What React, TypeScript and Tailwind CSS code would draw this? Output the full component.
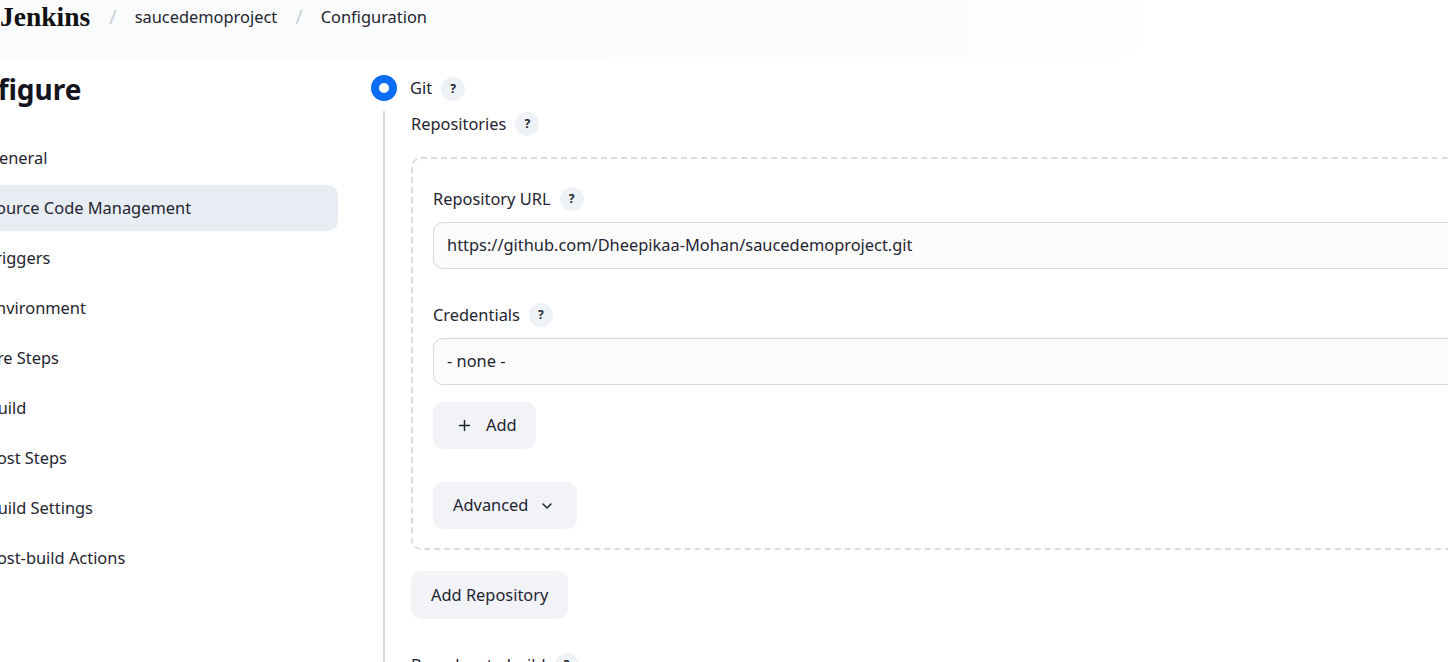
import { ChevronDown, Plus } from "lucide-react"

const navItems = [
  "General",
  "Source Code Management",
  "Triggers",
  "Environment",
  "Pre Steps",
  "Build",
  "Post Steps",
  "Build Settings",
  "Post-build Actions",
]

function Help() {
  return (
    <span className="inline-flex h-6 w-6 items-center justify-center rounded-full bg-[#eef1f5] text-[12px] font-bold text-[#1f2430]">
      ?
    </span>
  )
}

function Label({ text }: { text: string }) {
  return (
    <div className="flex h-6 items-center gap-[9px] text-[16.4px] text-[#1f2430]">
      <span>{text}</span>
      <Help />
    </div>
  )
}

function Field({ value }: { value: string }) {
  return (
    <div className="mt-[11px] flex h-[47px] items-center rounded-[10px] border border-[#d3d8e2] bg-[#fcfcfd] pl-[13px] text-[16.4px] text-[#1f2430]">
      {value}
    </div>
  )
}

export default function App() {
  return (
    <div
      className="relative h-[662px] w-[1448px] overflow-hidden bg-white text-[#1f2430]"
      style={{ fontFamily: '"Noto Sans", "Open Sans", sans-serif' }}
    >
      {/* header */}
      <div className="h-[58px] w-[1140px] rounded-br-[24px] bg-gradient-to-r from-[#fafbfc] via-[#fbfcfd] to-[#fdfdfe]">
        <div className="flex h-[34px] items-center text-[16.4px]">
          <span
            className="text-[27.5px] font-bold leading-none text-[#111]"
            style={{ fontFamily: '"Liberation Serif", serif' }}
          >
            Jenkins
          </span>
          <span className="ml-[19px] mr-[18px] text-[20px] text-[#c8cfdb]">/</span>
          <span>saucedemoproject</span>
          <span className="ml-[18px] mr-[18px] text-[20px] text-[#c8cfdb]">/</span>
          <span>Configuration</span>
        </div>
      </div>

      <div className="flex">
        {/* sidebar */}
        <div className="ml-[-50px] w-[388px] shrink-0">
          <h1 className="ml-[-6px] mt-[13px] h-9 text-[28px] font-bold leading-9 text-[#14141f]">
            Configure
          </h1>
          <div className="mt-[28px] flex flex-col gap-1">
            {navItems.map((item) => (
              <div
                key={item}
                className={
                  "flex h-[46px] items-center rounded-[10px] pl-[37px] text-[16.4px] " +
                  (item === "Source Code Management" ? "bg-[#e8ecf3]" : "")
                }
              >
                {item}
              </div>
            ))}
          </div>
        </div>

        {/* main */}
        <div className="ml-[33px] mt-[17px] flex-1">
          <div className="flex items-center">
            <span className="flex h-[26px] w-[26px] items-center justify-center rounded-full bg-[#0b6cf5]">
              <span className="h-[10px] w-[10px] rounded-full bg-white" />
            </span>
            <span className="ml-[13px] text-[16.4px]">Git</span>
            <span className="ml-[9px]">
              <Help />
            </span>
          </div>

          <div className="ml-[12px] mt-[10px] border-l-2 border-[#d3d9e3] pl-[26px] pt-px">
            <Label text="Repositories" />

            <div className="mt-[21px] w-[1100px] rounded-[10px] border-2 border-dashed border-[#d7dde7] pb-[19px] pl-[20px] pt-[28px]">
              <Label text="Repository URL" />
              <Field value="https://github.com/Dheepikaa-Mohan/saucedemoproject.git" />

              <div className="mt-[34px]">
                <Label text="Credentials" />
              </div>
              <Field value="- none -" />

              <button className="mt-[17px] flex h-[47px] items-center gap-[13px] rounded-[10px] bg-[#f1f3f7] pl-[23px] pr-[19px] text-[16.4px]">
                <Plus size={17} strokeWidth={2} />
                Add
              </button>

              <button className="mt-[33px] flex h-[47px] items-center gap-[11px] rounded-[10px] bg-[#f1f3f7] pl-[20px] pr-[22px] text-[16.4px]">
                Advanced
                <ChevronDown size={16} strokeWidth={2.2} />
              </button>
            </div>

            <button className="mt-[21px] flex h-[48px] items-center rounded-[10px] bg-[#f1f3f7] px-[20px] text-[16.4px]">
              Add Repository
            </button>

            <div className="mt-[34px] pb-10">
              <Label text="Branches to build" />
            </div>
          </div>
        </div>
      </div>
    </div>
  )
}
